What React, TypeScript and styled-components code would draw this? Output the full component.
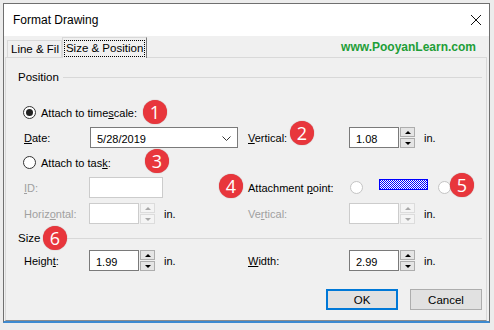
import React from "react";
import styled, { createGlobalStyle } from "styled-components";

const GlobalStyle = createGlobalStyle`
  html, body {
    margin: 0;
    padding: 0;
    background: #ececec;
  }
  body {
    font-family: "Liberation Sans", Arial, sans-serif;
    font-size: 11px;
    color: #000;
  }
`;

const Page = styled.div`
  width: 494px;
  height: 330px;
  padding: 3px 0 0 3px;
  box-sizing: border-box;
  overflow: hidden;
`;

const Window = styled.div`
  width: 487px;
  box-sizing: border-box;
  border: 1px solid #6f6f6f;
  border-bottom: 2px solid #3d8ad0;
  background: #f0f0f0;
  display: flex;
  flex-direction: column;
`;

const TitleBar = styled.div`
  height: 32px;
  background: #fff;
  display: flex;
  align-items: center;
  justify-content: space-between;
  padding: 0 8px 0 9px;
  font-size: 12px;
`;

const CloseButton = styled.div`
  width: 10px;
  height: 10px;
  display: flex;
`;

const TabStrip = styled.div`
  height: 21px;
  display: flex;
  align-items: flex-end;
  padding-left: 3px;
  position: relative;
  z-index: 1;
`;

const Tab = styled.div<{ $active?: boolean }>`
  height: ${(p) => (p.$active ? "21px" : "17px")};
  margin-bottom: ${(p) => (p.$active ? "-1px" : "0")};
  box-sizing: border-box;
  border: 1px solid #d9d9d9;
  border-right-color: ${(p) => (p.$active ? "#7a7a7a" : "#d9d9d9")};
  border-bottom: none;
  background: #f0f0f0;
  display: flex;
  align-items: center;
  padding: 0 2px 0 ${(p) => (p.$active ? "2px" : "3px")};
  white-space: nowrap;
  overflow: hidden;
  font-size: 11.5px;
`;

const FocusText = styled.span`
  outline: 1px dotted #000;
  outline-offset: 0;
  padding: 0 1px;
  line-height: 15px;
`;

const SiteLink = styled.span`
  margin-left: auto;
  margin-right: 13px;
  align-self: center;
  color: #1e9e38;
  font-weight: bold;
  font-size: 12px;
`;

const Panel = styled.div`
  position: relative;
  margin: 0 2px 0 1px;
  border: 1px solid #d9d9d9;
  border-bottom-color: #8c8c8c;
  padding: 11px 4px 10px 18px;
  display: flex;
  flex-direction: column;
`;

const GroupHeader = styled.div<{ $mt?: number }>`
  height: 16px;
  margin: ${(p) => p.$mt ?? 0}px 0 0 -6px;
  display: flex;
  align-items: center;
  font-size: 11.5px;
  &::after {
    content: "";
    flex: 1;
    height: 1px;
    background: #d8d8d8;
    margin-left: 4px;
  }
`;

const Row = styled.div<{ $mt: number }>`
  height: 21px;
  margin-top: ${(p) => p.$mt}px;
  display: flex;
  align-items: center;
`;

const Half = styled.div<{ $w?: number }>`
  width: ${(p) => (p.$w ? `${p.$w}px` : "auto")};
  display: flex;
  align-items: center;
  height: 100%;
`;

const Label = styled.span<{ $w: number; $disabled?: boolean }>`
  width: ${(p) => p.$w}px;
  color: ${(p) => (p.$disabled ? "#a0a0a0" : "#000")};
  white-space: nowrap;
  flex-shrink: 0;
`;

const TextBox = styled.div<{ $w: number; $disabled?: boolean }>`
  width: ${(p) => p.$w}px;
  height: 21px;
  box-sizing: border-box;
  border: 1px solid ${(p) => (p.$disabled ? "#cccccc" : "#7a7a7a")};
  background: #fff;
  display: flex;
  align-items: center;
  padding: 2px 0 0 6px;
  flex-shrink: 0;
`;

const Combo = styled(TextBox)`
  justify-content: space-between;
  padding-right: 6px;
`;

const SpinBox = styled.div<{ $ml: number }>`
  margin-left: ${(p) => p.$ml}px;
  width: 15px;
  height: 21px;
  display: flex;
  flex-direction: column;
  gap: 1px;
`;

const SpinPart = styled.div<{ $down?: boolean; $disabled?: boolean }>`
  flex: 1;
  box-sizing: border-box;
  border: 1px solid ${(p) => (p.$disabled ? "#dcdcdc" : "#adadad")};
  background: ${(p) => (p.$disabled ? "#f4f4f4" : "#e5e5e5")};
  display: flex;
  align-items: center;
  justify-content: center;
  &::after {
    content: "";
    border-left: 3px solid transparent;
    border-right: 3px solid transparent;
    ${(p) =>
      p.$down
        ? `border-top: 3px solid ${p.$disabled ? "#a8a8a8" : "#000"};`
        : `border-bottom: 3px solid ${p.$disabled ? "#a8a8a8" : "#000"};`}
  }
`;

const Unit = styled.span<{ $ml: number }>`
  margin-left: ${(p) => p.$ml}px;
`;

const RadioLabel = styled.label`
  display: flex;
  align-items: center;
  margin-left: -1px;
`;

const Radio = styled.span<{ $checked?: boolean; $disabled?: boolean; $ml?: number }>`
  width: 13px;
  height: 13px;
  box-sizing: border-box;
  border-radius: 50%;
  border: 1px solid ${(p) => (p.$disabled ? "#c4c4c4" : "#333")};
  background: #fff;
  margin-left: ${(p) => p.$ml ?? 0}px;
  display: flex;
  align-items: center;
  justify-content: center;
  flex-shrink: 0;
  &::after {
    content: "";
    width: 7px;
    height: 7px;
    border-radius: 50%;
    background: ${(p) => (p.$checked ? "#222" : "transparent")};
  }
`;

const RadioText = styled.span`
  margin-left: 5px;
`;

const HatchBox = styled.svg`
  margin: 0 0 7px 16px;
  display: block;
  flex-shrink: 0;
`;

const ButtonRow = styled.div`
  margin-top: 18px;
  display: flex;
  justify-content: flex-end;
  gap: 12px;
`;

const DialogButton = styled.button<{ $default?: boolean }>`
  width: 72px;
  height: 21px;
  box-sizing: border-box;
  background: #e1e1e1;
  border: ${(p) => (p.$default ? "2px solid #0078d7" : "1px solid #adadad")};
  font-family: inherit;
  font-size: 11.5px;
  padding: 0;
  color: #000;
`;

const Badge = styled.div<{ $x: number; $y: number }>`
  position: absolute;
  left: ${(p) => p.$x - 18}px;
  top: ${(p) => p.$y - 70}px;
  width: 24px;
  height: 24px;
  border-radius: 50%;
  background: #e8363c;
  box-shadow: 0 0 1px rgba(120, 0, 0, 0.6);
  color: #fff;
  font-family: "Open Sans", "Noto Sans", sans-serif;
  font-size: 18px;
  line-height: 24px;
  text-align: center;
`;

const Spinner = ({ ml, disabled }: { ml: number; disabled?: boolean }) => (
  <SpinBox $ml={ml}>
    <SpinPart $disabled={disabled} />
    <SpinPart $down $disabled={disabled} />
  </SpinBox>
);

// hatched blue swatch next to "Attachment point"
const Hatch = () => (
  <HatchBox width="49" height="11" shapeRendering="crispEdges">
    <defs>
      <pattern id="chk" width="2" height="2" patternUnits="userSpaceOnUse">
        <rect width="2" height="2" fill="#fff" />
        <rect width="1" height="1" fill="#0000ff" />
        <rect x="1" y="1" width="1" height="1" fill="#0000ff" />
      </pattern>
    </defs>
    <rect width="49" height="11" fill="url(#chk)" />
    <rect x="0.5" y="0.5" width="48" height="10" fill="none" stroke="#0000ff" />
  </HatchBox>
);

const badges = [
  { n: 1, x: 155, y: 112 },
  { n: 2, x: 302, y: 133 },
  { n: 3, x: 157, y: 161 },
  { n: 4, x: 231, y: 186 },
  { n: 5, x: 462, y: 185 },
  { n: 6, x: 55, y: 238 },
];

export default function App() {
  return (
    <>
      <GlobalStyle />
      <Page>
        <Window>
          <TitleBar>
            <span>Format Drawing</span>
            <CloseButton>
              <svg width="10" height="10" viewBox="0 0 10 10">
                <path d="M0 0L10 10M10 0L0 10" stroke="#111" strokeWidth="1" />
              </svg>
            </CloseButton>
          </TitleBar>
          <TabStrip>
            <Tab>Line &amp; Fil</Tab>
            <Tab $active>
              <FocusText>Size &amp; Position</FocusText>
            </Tab>
            <SiteLink>www.PooyanLearn.com</SiteLink>
          </TabStrip>
          <Panel>
            <GroupHeader>Position</GroupHeader>

            <Row $mt={17}>
              <RadioLabel>
                <Radio $checked />
                <RadioText>
                  Attach to time<u>s</u>cale:
                </RadioText>
              </RadioLabel>
            </Row>

            <Row $mt={4}>
              <Half $w={224}>
                <Label $w={66}>
                  <u>D</u>ate:
                </Label>
                <Combo $w={148}>
                  <span>5/28/2019</span>
                  <svg width="9" height="5" viewBox="0 0 9 5">
                    <polyline points="0.5,0.5 4.5,4.5 8.5,0.5" fill="none" stroke="#333" />
                  </svg>
                </Combo>
              </Half>
              <Half>
                <Label $w={101}>
                  <u>V</u>ertical:
                </Label>
                <TextBox $w={50}>1.08</TextBox>
                <Spinner ml={1} />
                <Unit $ml={9}>in.</Unit>
              </Half>
            </Row>

            <Row $mt={4}>
              <RadioLabel>
                <Radio />
                <RadioText>
                  Attach to tas<u>k</u>:
                </RadioText>
              </RadioLabel>
            </Row>

            <Row $mt={4}>
              <Half $w={224}>
                <Label $w={65} $disabled>
                  <u>I</u>D:
                </Label>
                <TextBox $w={74} $disabled />
              </Half>
              <Half>
                <Label $w={102}>
                  Attachment <u>p</u>oint:
                </Label>
                <Radio $disabled />
                <Hatch />
                <Radio $disabled $ml={10} />
              </Half>
            </Row>

            <Row $mt={5}>
              <Half $w={224}>
                <Label $w={65} $disabled>
                  Horiz<u>o</u>ntal:
                </Label>
                <TextBox $w={50} $disabled />
                <Spinner ml={1} disabled />
                <Unit $ml={9}>in.</Unit>
              </Half>
              <Half>
                <Label $w={101} $disabled>
                  Ve<u>r</u>tical:
                </Label>
                <TextBox $w={50} $disabled />
                <Spinner ml={1} disabled />
                <Unit $ml={9}>in.</Unit>
              </Half>
            </Row>

            <GroupHeader $mt={6}>Size</GroupHeader>

            <Row $mt={4}>
              <Half $w={224}>
                <Label $w={65}>
                  Heigh<u>t</u>:
                </Label>
                <TextBox $w={50}>1.99</TextBox>
                <Spinner ml={1} />
                <Unit $ml={9}>in.</Unit>
              </Half>
              <Half>
                <Label $w={101}>
                  <u>W</u>idth:
                </Label>
                <TextBox $w={50}>2.99</TextBox>
                <Spinner ml={1} />
                <Unit $ml={9}>in.</Unit>
              </Half>
            </Row>

            <ButtonRow>
              <DialogButton $default>OK</DialogButton>
              <DialogButton>Cancel</DialogButton>
            </ButtonRow>

            {badges.map((b) => (
              <Badge key={b.n} $x={b.x} $y={b.y}>
                {b.n}
              </Badge>
            ))}
          </Panel>
        </Window>
      </Page>
    </>
  );
}
